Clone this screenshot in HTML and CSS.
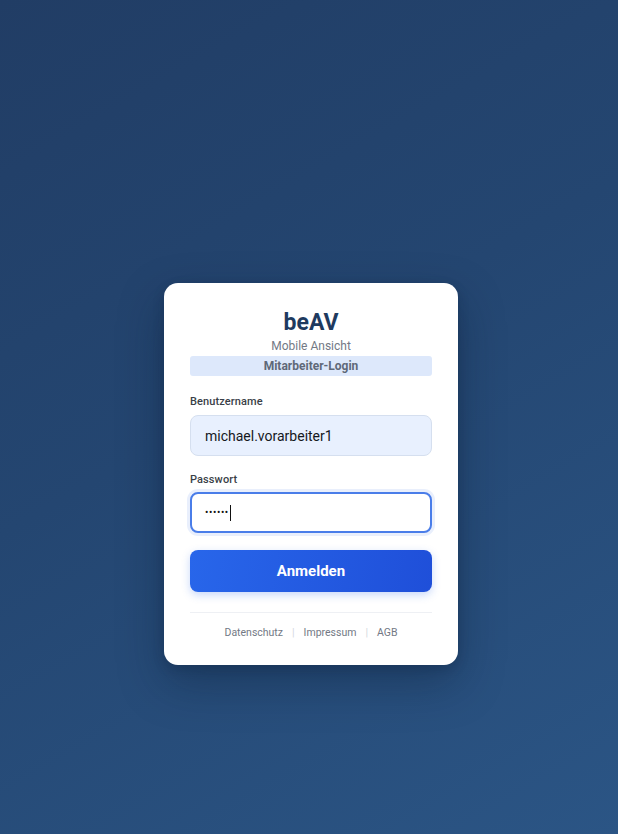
FILE: index.html
```html
<!DOCTYPE html>
<html lang="de">
<head>
<meta charset="utf-8">
<title>beAV – Mitarbeiter-Login</title>
<link rel="stylesheet" href="styles.css">
</head>
<body>
<main class="page">
  <section class="card">
    <header class="brand">
      <h1 class="title">beAV</h1>
      <div class="subtitle">Mobile Ansicht</div>
      <div class="badge">Mitarbeiter-Login</div>
    </header>
    <form class="form">
      <div class="field">
        <label class="label">Benutzername</label>
        <div class="input input-filled">michael.vorarbeiter1</div>
      </div>
      <div class="field field-pass">
        <label class="label">Passwort</label>
        <div class="input input-focus"><span class="dots">••••••</span><span class="caret"></span></div>
      </div>
      <button type="button" class="btn">Anmelden</button>
    </form>
    <footer class="links">
      <a class="link">Datenschutz</a>
      <span class="sep">|</span>
      <a class="link">Impressum</a>
      <span class="sep">|</span>
      <a class="link">AGB</a>
    </footer>
  </section>
</main>
</body>
</html>
```
FILE: styles.css
```css
* { box-sizing: border-box; }
html, body { margin: 0; padding: 0; }
body {
  font-family: Roboto, "Liberation Sans", sans-serif;
  background: linear-gradient(150deg, #213d65 0%, #244671 45%, #2b5585 100%);
  min-height: 834px;
}
.page {
  min-height: 834px;
  display: flex;
  justify-content: center;
  align-items: flex-start;
  padding-top: 283px;
  padding-left: 4px;
}
.card {
  width: 294px;
  background: #ffffff;
  border-radius: 14px;
  padding: 26px 26px 25px;
  box-shadow: 0 18px 45px rgba(10, 25, 50, 0.35), 0 4px 12px rgba(10, 25, 50, 0.2);
}
.brand { text-align: center; }
.title {
  margin: 0;
  font-size: 23px;
  line-height: 28px;
  font-weight: 700;
  color: #1e3a5f;
}
.subtitle {
  margin-top: 1px;
  font-size: 12px;
  line-height: 16px;
  color: #737985;
}
.badge {
  margin-top: 2px;
  height: 20px;
  line-height: 20px;
  background: #dde8fb;
  border-radius: 3px;
  font-size: 12px;
  font-weight: 700;
  color: #5f6878;
}
.form {
  margin-top: 19px;
  display: flex;
  flex-direction: column;
}
.field { display: flex; flex-direction: column; margin-bottom: 17px; }
.label {
  font-size: 11px;
  line-height: 14px;
  font-weight: 500;
  color: #3a3f48;
  margin-bottom: 6px;
  letter-spacing: 0.1px;
}
.field-pass .label { margin-bottom: 5px; }
.input {
  height: 41px;
  border-radius: 8px;
  display: flex;
  align-items: center;
  padding-left: 14px;
  font-size: 14px;
  color: #15181d;
}
.input-filled {
  background: #e8f0fe;
  border: 1px solid #d5dfef;
}
.input-focus {
  background: #ffffff;
  border: 2px solid #4a7de9;
  padding-left: 13px;
  box-shadow: 0 0 0 3px rgba(74, 125, 233, 0.12);
}
.dots {
  font-size: 10px;
  letter-spacing: 0.6px;
  color: #111;
}
.caret {
  display: inline-block;
  width: 1px;
  height: 16px;
  background: #111;
  margin-left: 1px;
}
.btn {
  margin-top: 0;
  height: 42px;
  border: none;
  border-radius: 8px;
  background: linear-gradient(100deg, #2866ea 0%, #1f4fd9 100%);
  color: #ffffff;
  font-family: inherit;
  font-size: 15px;
  font-weight: 700;
  box-shadow: 0 3px 8px rgba(37, 99, 235, 0.25);
}
.links {
  margin-top: 20px;
  border-top: 1px solid #eef0f4;
  padding-top: 13px;
  display: flex;
  justify-content: center;
  align-items: center;
  gap: 9px;
  font-size: 10.5px;
  line-height: 14px;
}
.link { color: #737985; text-decoration: none; }
.sep { color: #d3d7de; }
```
